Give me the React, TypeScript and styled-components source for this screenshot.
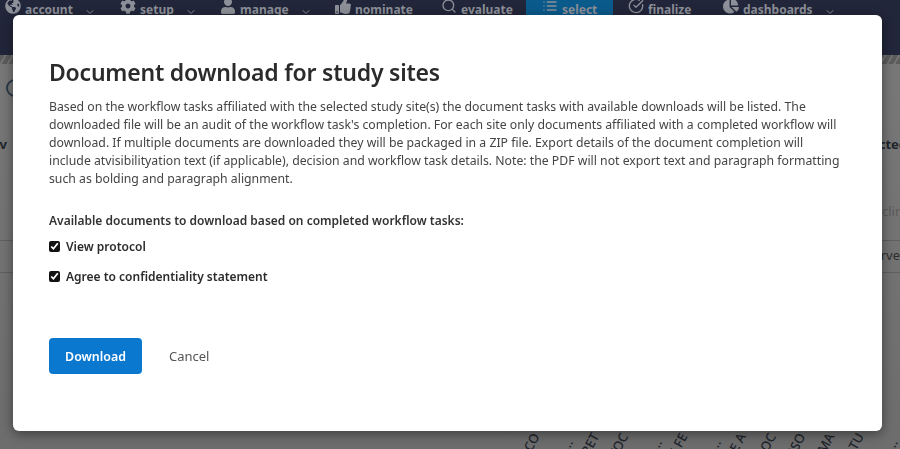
import React from "react";
import styled, { createGlobalStyle } from "styled-components";
import { FaGlobeAmericas, FaCog, FaUser, FaThumbsUp, FaChartPie } from "react-icons/fa";
import { LuChevronDown, LuSearch, LuList, LuCircleCheckBig } from "react-icons/lu";

const GlobalStyle = createGlobalStyle`
  html, body {
    margin: 0;
    height: 100%;
    overflow: hidden;
    background: #6f6f6f;
    font-family: "Noto Sans", "Open Sans", sans-serif;
  }
`;

type NavEntry = {
  label: string;
  icon: React.ReactNode;
  caret?: boolean;
  active?: boolean;
  width: number;
};

const navEntries: NavEntry[] = [
  { label: "account", icon: <FaGlobeAmericas />, caret: true, width: 115 },
  { label: "setup", icon: <FaCog />, caret: true, width: 100 },
  { label: "manage", icon: <FaUser />, caret: true, width: 115 },
  { label: "nominate", icon: <FaThumbsUp />, width: 106 },
  { label: "evaluate", icon: <LuSearch />, width: 85 },
  { label: "select", icon: <LuList />, active: true, width: 87 },
  { label: "finalize", icon: <LuCircleCheckBig />, width: 95 },
  { label: "dashboards", icon: <FaChartPie />, caret: true, width: 130 },
];

const headers = [
  { text: "INCO", tucked: true },
  { text: "SITE ..." },
  { text: "SECRET", tucked: true },
  { text: "PROTOC", tucked: true },
  { text: "SITE ..." },
  { text: "SITE FE", tucked: true },
  { text: "SITE ..." },
  { text: "SITE A", tucked: true },
  { text: "ASSOC", tucked: true },
  { text: "INCLUSO", tucked: true },
  { text: "ESTIMA", tucked: true },
  { text: "STATU", tucked: true },
  { text: "DESIGN ..." },
];

const App = () => (
  <>
    <GlobalStyle />
    <Page>
      <NavBar>
        {navEntries.map((entry) => (
          <NavItem key={entry.label} $active={entry.active} $width={entry.width}>
            <NavIcon>{entry.icon}</NavIcon>
            {entry.label}
            {entry.caret && <Caret />}
          </NavItem>
        ))}
      </NavBar>
      <Hatch />
      <Behind>
        <SearchRing />
        <SideLabels>
          <strong>Inv</strong>
          <strong>cted</strong>
        </SideLabels>
        <FaintRow>clin</FaintRow>
        <RuledRow>rve</RuledRow>
        <Headers>
          {headers.map((header, index) => (
            <HeaderCell key={index}>
              <HeaderText $tucked={header.tucked}>{header.text}</HeaderText>
            </HeaderCell>
          ))}
        </Headers>
      </Behind>
    </Page>
    <Modal>
      <Title>Document download for study sites</Title>
      <Description>
        Based on the workflow tasks affiliated with the selected study site(s) the document tasks with available
        downloads will be listed. The downloaded file will be an audit of the workflow task's completion. For each
        site only documents affiliated with a completed workflow will download. If multiple documents are downloaded
        they will be packaged in a ZIP file. Export details of the document completion will include atvisibilityation
        text (if applicable), decision and workflow task details. Note: the PDF will not export text and paragraph
        formatting such as bolding and paragraph alignment.
      </Description>
      <ListHeading>Available documents to download based on completed workflow tasks:</ListHeading>
      <CheckRow>
        <CheckBox type="checkbox" defaultChecked />
        View protocol
      </CheckRow>
      <CheckRow>
        <CheckBox type="checkbox" defaultChecked />
        Agree to confidentiality statement
      </CheckRow>
      <Actions>
        <PrimaryButton>Download</PrimaryButton>
        <TextButton>Cancel</TextButton>
      </Actions>
    </Modal>
  </>
);

const Page = styled.div`
  display: flex;
  flex-direction: column;
  height: 449px;
  overflow: hidden;
`;

const NavBar = styled.nav`
  display: flex;
  flex: none;
  height: 55px;
  padding-left: 5px;
  background: #22263a;
`;

const NavItem = styled.div<{ $active?: boolean; $width: number }>`
  display: flex;
  flex: none;
  align-items: flex-start;
  gap: 4px;
  box-sizing: border-box;
  width: ${(props) => props.$width}px;
  height: 15px;
  margin-right: ${(props) => (props.$active ? "15px" : "0")};
  padding-left: ${(props) => (props.$active ? "16px" : "0")};
  background: ${(props) => (props.$active ? "#0a5a8c" : "transparent")};
  color: #8d9098;
  font-size: 12px;
  font-weight: 700;
  line-height: 19px;
`;

const NavIcon = styled.span`
  display: flex;
  margin-top: -2px;
  font-size: 16px;
`;

const Caret = styled(LuChevronDown)`
  width: 12px;
  height: 12px;
  margin: 6px 0 0 7px;
`;

const Hatch = styled.div`
  flex: none;
  height: 9px;
  background: repeating-linear-gradient(120deg, #5c5c5c 0 4px, #737373 4px 6px);
`;

const Behind = styled.div`
  display: flex;
  flex: 1;
  flex-direction: column;
  background: linear-gradient(#787878, #6d6d6d);
`;

const SearchRing = styled.div`
  flex: none;
  box-sizing: border-box;
  width: 18px;
  height: 18px;
  margin: 15px 0 0 6px;
  border: 2px solid #2c3a4a;
  border-radius: 50%;
`;

const SideLabels = styled.div`
  display: flex;
  flex: none;
  justify-content: space-between;
  margin: 38px -7px 0 -14px;
  color: #20242c;
  font-size: 13px;
`;

const FaintRow = styled.div`
  flex: none;
  align-self: flex-end;
  margin: 49px -3px 0 0;
  color: #5b5b5b;
  font-size: 13px;
`;

const RuledRow = styled.div`
  flex: none;
  align-self: stretch;
  margin-top: 20px;
  padding: 5px 0 8px;
  border-block: 1px solid #5f5f5f;
  color: #2d2d2d;
  font-size: 13px;
  line-height: 18px;
  text-align: right;
`;

const Headers = styled.div`
  display: flex;
  flex: none;
  justify-content: flex-end;
  height: 17px;
  margin-top: auto;
  padding-right: 5px;
`;

const HeaderCell = styled.div`
  display: flex;
  flex: none;
  justify-content: flex-end;
  width: 29.5px;
`;

const HeaderText = styled.span<{ $tucked?: boolean }>`
  flex: none;
  color: #20242c;
  font-size: 13px;
  font-weight: 500;
  line-height: 14px;
  white-space: nowrap;
  transform-origin: 100% 50%;
  transform: translate(${(props) => (props.$tucked ? "-4px, -6px" : "0, 0")}) rotate(-62deg);
`;

const Modal = styled.section`
  position: fixed;
  top: 15px;
  left: 13px;
  box-sizing: border-box;
  width: 869px;
  height: 416px;
  padding: 41px 36px 0;
  border-radius: 6px;
  background: #fff;
  box-shadow: 0 3px 12px rgba(0, 0, 0, 0.45);
  color: #333;
`;

const Title = styled.h1`
  margin: 0;
  color: #2b2b2b;
  font-size: 23px;
  font-weight: 600;
  letter-spacing: -0.22px;
  line-height: 32px;
`;

const Description = styled.p`
  margin: 10px 0 0;
  color: #444;
  font-size: 12.25px;
  line-height: 18px;
`;

const ListHeading = styled.p`
  margin: 24px 0 0;
  color: #333;
  font-size: 12px;
  font-weight: 600;
  line-height: 18px;
`;

const CheckRow = styled.label`
  display: flex;
  align-items: center;
  gap: 6px;
  height: 18px;
  margin-top: 7px;
  color: #2b2b2b;
  font-size: 12px;
  font-weight: 600;

  & + & {
    margin-top: 12px;
  }
`;

const CheckBox = styled.input`
  flex: none;
  width: 11px;
  height: 11px;
  margin: 0;
  accent-color: #111;
`;

const Actions = styled.div`
  display: flex;
  align-items: center;
  gap: 27px;
  margin-top: 53px;
`;

const PrimaryButton = styled.button`
  width: 93px;
  height: 36px;
  padding: 0;
  border: 0;
  border-radius: 4px;
  background: #0b78cf;
  color: #fff;
  font: 600 12.4px "Noto Sans", sans-serif;
`;

const TextButton = styled.button`
  padding: 0;
  border: 0;
  background: none;
  color: #555;
  font: 400 13px "Noto Sans", sans-serif;
`;

export default App;
